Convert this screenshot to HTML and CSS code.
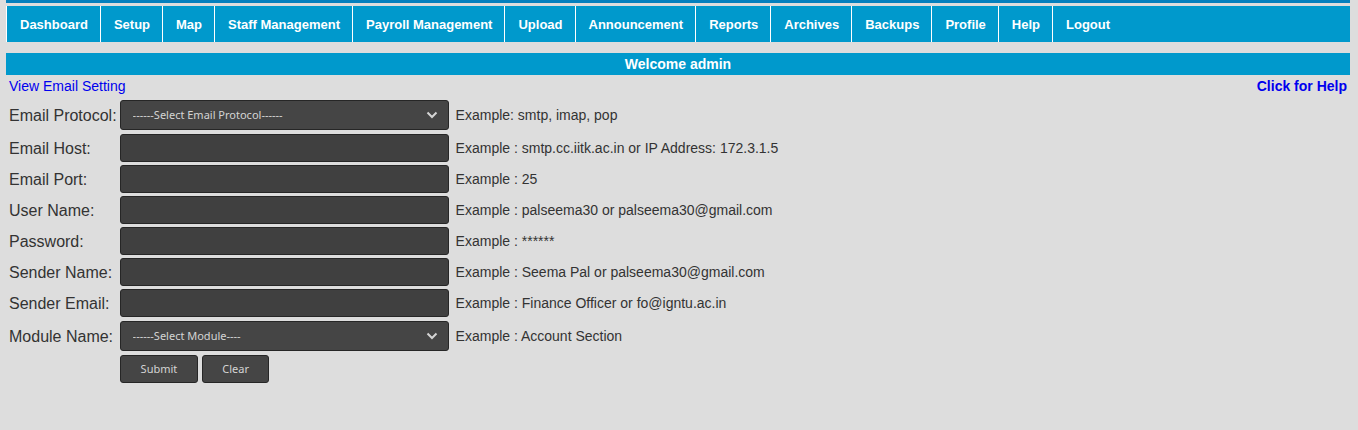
FILE: index.html
```html
<!DOCTYPE html>
<html lang="en">
<head>
<meta charset="utf-8">
<title>Email Setting</title>
<link rel="stylesheet" href="styles.css">
</head>
<body>
<div class="top-strip"></div>
<nav class="menu" aria-label="Main">
  <a href="#">Dashboard</a>
  <a href="#">Setup</a>
  <a href="#">Map</a>
  <a href="#">Staff Management</a>
  <a href="#">Payroll Management</a>
  <a href="#">Upload</a>
  <a href="#">Announcement</a>
  <a href="#">Reports</a>
  <a href="#">Archives</a>
  <a href="#">Backups</a>
  <a href="#">Profile</a>
  <a href="#">Help</a>
  <a href="#">Logout</a>
</nav>
<main>
  <div class="welcome">Welcome admin</div>
  <div class="links">
    <a href="#">View Email Setting</a>
    <a class="help" href="#">Click for Help</a>
  </div>
  <form class="form">
    <label for="protocol">Email Protocol:</label>
    <div class="select">
      <select id="protocol"><option>------Select Email Protocol------</option></select>
      <svg class="chevron" viewBox="0 0 12 8" aria-hidden="true"><path d="M1.5 1.5 6 6l4.500-4.500"/></svg>
    </div>
    <span class="example">Example: smtp, imap, pop</span>

    <label for="host">Email Host:</label>
    <input id="host" type="text">
    <span class="example">Example : smtp.cc.iitk.ac.in or IP Address: 172.3.1.5</span>

    <label for="port">Email Port:</label>
    <input id="port" type="text">
    <span class="example">Example : 25</span>

    <label for="user">User Name:</label>
    <input id="user" type="text">
    <span class="example">Example : palseema30 or palseema30@gmail.com</span>

    <label for="password">Password:</label>
    <input id="password" type="password">
    <span class="example">Example : ******</span>

    <label for="sender">Sender Name:</label>
    <input id="sender" type="text">
    <span class="example">Example : Seema Pal or palseema30@gmail.com</span>

    <label for="email">Sender Email:</label>
    <input id="email" type="text">
    <span class="example">Example : Finance Officer or fo@igntu.ac.in</span>

    <label for="module">Module Name:</label>
    <div class="select">
      <select id="module"><option>------Select Module----</option></select>
      <svg class="chevron" viewBox="0 0 12 8" aria-hidden="true"><path d="M1.5 1.5 6 6l4.500-4.500"/></svg>
    </div>
    <span class="example">Example : Account Section</span>

    <div class="actions">
      <button class="submit" type="submit">Submit</button>
      <button type="reset">Clear</button>
    </div>
  </form>
</main>
</body>
</html>
```
FILE: styles.css
```css
* {
  box-sizing: border-box;
}

body {
  margin: 0;
  padding: 0 8px 0 6px;
  background: #ddd;
  color: #333;
  font: 14px/20px "Liberation Sans", Arial, sans-serif;
}

.top-strip {
  height: 3px;
  margin-bottom: 3px;
  background: #0480be;
}

.menu {
  display: flex;
  flex-wrap: wrap;
  margin-bottom: 11px;
  background: #09c;
}

.menu a {
  padding: 9px 12px 7px 13px;
  border-left: 1px solid #fff;
  color: #fff;
  font-size: 13px;
  font-weight: bold;
  text-decoration: none;
}

.welcome {
  padding: 1px 0;
  background: #09c;
  color: #fff;
  font-weight: bold;
  text-align: center;
}

.links {
  display: flex;
  justify-content: space-between;
  padding: 1px 3px;
}

.links a {
  color: #00e;
  text-decoration: none;
}

.links .help {
  font-weight: bold;
}

.form {
  display: grid;
  grid-template-columns: max-content 329px 1fr;
  align-items: center;
  gap: 3px;
  padding: 2px 3px;
}

label {
  padding-top: 2px;
  font-size: 16px;
}

input,
select,
button {
  height: 28px;
  margin: 0;
  border: 1px solid #262626;
  border-radius: 3px;
  background: #404040;
  color: #d4d4d4;
  font: 11px/16px "Noto Sans", sans-serif;
}

input {
  width: 100%;
  padding: 0 12px;
}

.select {
  position: relative;
  padding: 1px 0;
}

select {
  display: block;
  width: 100%;
  height: 30px;
  padding: 0 28px 0 12px;
  appearance: none;
  background: #454545;
}

.chevron {
  position: absolute;
  top: 12px;
  right: 11px;
  width: 12px;
  height: 8px;
  fill: none;
  stroke: #d4d4d4;
  stroke-width: 2;
  pointer-events: none;
}

.example {
  padding-left: 4px;
}

.actions {
  display: flex;
  grid-column: 2;
  gap: 4px;
}

button {
  padding: 0 19px;
  background: #454545;
}

.submit {
  padding: 0 20px;
}
```
